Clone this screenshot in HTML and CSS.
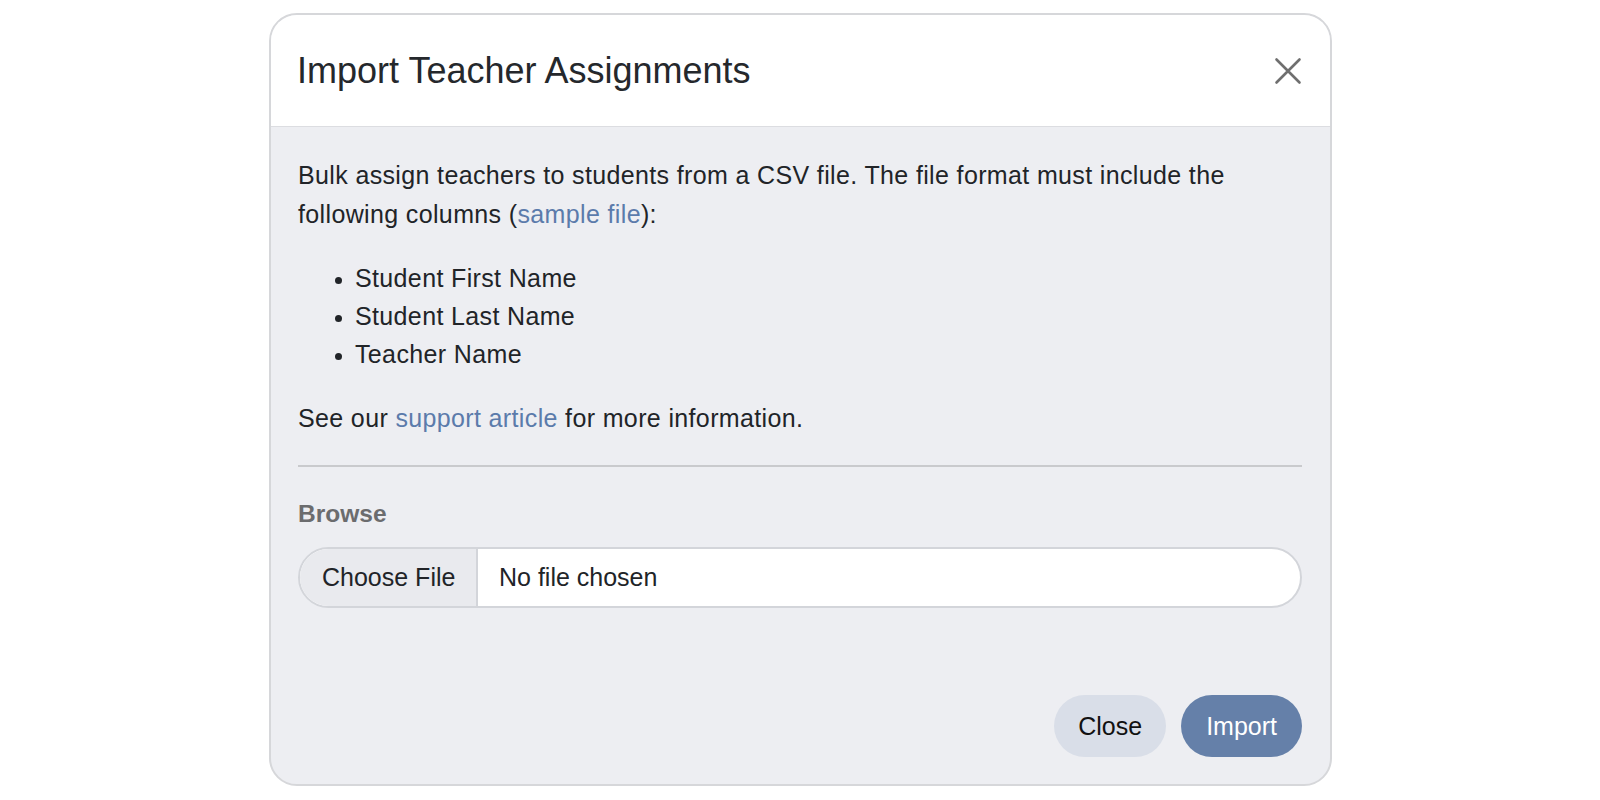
FILE: index.html
```html
<!DOCTYPE html>
<html>
<head>
<meta charset="utf-8">
<link rel="stylesheet" href="styles.css">
</head>
<body>
<div class="modal">
  <div class="modal-header">
    <h1 class="modal-title">Import Teacher Assignments</h1>
    <button class="close-x" aria-label="Close">
      <svg width="28" height="28" viewBox="0 0 28 28"><path d="M2.5 2.5L25.5 25.5M25.5 2.5L2.5 25.5" stroke="#6f6f6f" stroke-width="2.6" stroke-linecap="round" fill="none"/></svg>
    </button>
  </div>
  <div class="modal-body">
    <p class="intro">Bulk assign teachers to students from a CSV file. The file format must include the following columns (<a href="#">sample file</a>):</p>
    <ul class="cols">
      <li>Student First Name</li>
      <li>Student Last Name</li>
      <li>Teacher Name</li>
    </ul>
    <p class="more">See our <a href="#">support article</a> for more information.</p>
    <div class="divider"></div>
    <div class="label">Browse</div>
    <div class="file-input">
      <span class="file-btn">Choose File</span>
      <span class="file-name">No file chosen</span>
    </div>
    <div class="actions">
      <button class="btn btn-close">Close</button>
      <button class="btn btn-import">Import</button>
    </div>
  </div>
</div>
</body>
</html>
```
FILE: styles.css
```css
* { box-sizing: border-box; }
html, body { margin: 0; padding: 0; background: #ffffff; }
body {
  font-family: "Liberation Sans", Arial, sans-serif;
  color: #212428;
  padding-top: 13px;
}
.modal {
  width: 1063px;
  margin-left: 269px;
  border: 2px solid #d6d7da;
  border-radius: 28px;
  overflow: hidden;
  background: #edeef2;
}
.modal-header {
  height: 112px;
  background: #ffffff;
  border-bottom: 1px solid #dcdde1;
  display: flex;
  align-items: center;
  justify-content: space-between;
  padding: 0 28px 0 26px;
}
.modal-title {
  margin: 0;
  font-size: 36px;
  font-weight: 400;
  color: #25282c;
}
.close-x {
  border: 0;
  background: transparent;
  padding: 0;
  width: 28px;
  height: 28px;
  display: flex;
  cursor: pointer;
}
.modal-body {
  padding: 29px 28px 27px 27px;
  font-size: 25px;
  letter-spacing: 0.36px;
}
.intro, .more {
  margin: 0;
  line-height: 39px;
}
a { color: #5b7bab; text-decoration: none; }
.cols {
  margin: 25px 0 26px 0;
  padding-left: 57px;
  line-height: 38px;
}
.cols li::marker { font-size: 22px; }
.divider {
  height: 2px;
  background: #c9cacd;
  margin-top: 27px;
}
.label {
  margin-top: 32px;
  font-size: 24.5px;
  font-weight: 700;
  color: #6b6c6e;
  line-height: 30px;
  letter-spacing: 0;
}
.file-input {
  margin-top: 18px;
  height: 61px;
  border: 2px solid #d3d5da;
  border-radius: 31px;
  overflow: hidden;
  display: flex;
  align-items: stretch;
  background: #ffffff;
  letter-spacing: 0;
}
.file-btn {
  width: 178px;
  background: #e9eaee;
  border-right: 2px solid #d3d5da;
  display: flex;
  align-items: center;
  padding-left: 22px;
}
.file-name {
  display: flex;
  align-items: center;
  padding-left: 21px;
}
.actions {
  margin-top: 87px;
  display: flex;
  justify-content: flex-end;
  gap: 15px;
}
.btn {
  height: 62px;
  border: 0;
  border-radius: 31px;
  font-family: inherit;
  font-size: 25px;
  padding: 0 24px;
  letter-spacing: 0;
}
.btn-close { background: #d9dee8; color: #111; }
.btn-import { background: #6580a9; color: #ffffff; padding: 0 25px; }
```
